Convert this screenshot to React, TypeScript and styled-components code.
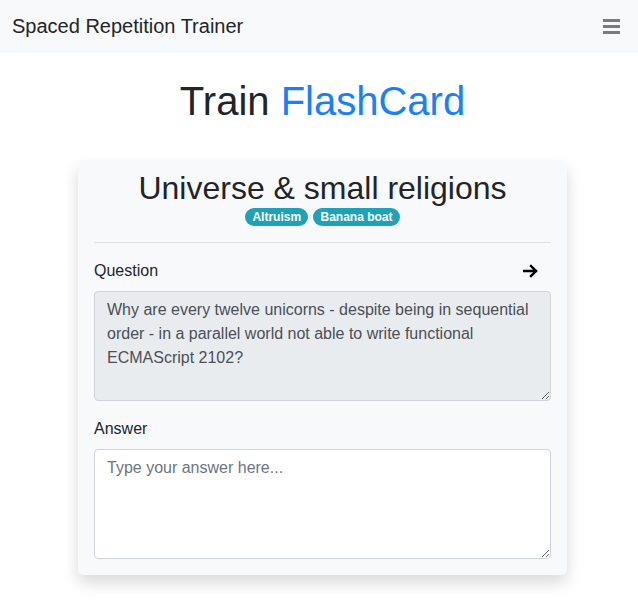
import React from "react";
import styled, { createGlobalStyle } from "styled-components";

const GlobalStyle = createGlobalStyle`
  * { box-sizing: border-box; }
  body {
    margin: 0;
    background: #ffffff;
    color: #212529;
    font-family: "Liberation Sans", Arial, sans-serif;
    font-size: 16px;
    line-height: 1.5;
  }
`;

const Navbar = styled.nav`
  height: 53px;
  background: #f8f9fa;
  display: flex;
  align-items: center;
  justify-content: space-between;
  padding: 0 18px 0 12px;
`;

const Brand = styled.a`
  font-size: 20px;
  line-height: 30px;
  color: #212529;
  text-decoration: none;
  margin-top: -2px;
`;

const Toggler = styled.button`
  border: 0;
  background: transparent;
  padding: 0;
  width: 17px;
  height: 17px;
  display: flex;
  cursor: pointer;
`;

const Main = styled.main`
  display: flex;
  flex-direction: column;
  align-items: center;
  padding: 0 0 40px 7px;
`;

const PageTitle = styled.h1`
  margin: 24px 0 0;
  font-size: 40px;
  font-weight: 400;
  line-height: 1.2;
`;

const Accent = styled.span`
  color: #1a7ff8;
`;

const Card = styled.section`
  width: 489px;
  margin-top: 35px;
  background: #f8f9fa;
  border-radius: 5px;
  box-shadow: 0 8px 16px rgba(0, 0, 0, 0.15);
  padding: 9px 16px 16px;
`;

const CardTitle = styled.h2`
  margin: 0;
  text-align: center;
  font-size: 32px;
  font-weight: 400;
  line-height: 1.2;
`;

const BadgeRow = styled.div`
  display: flex;
  justify-content: center;
  gap: 5px;
  margin-top: 1px;
`;

const Badge = styled.span`
  display: inline-block;
  background: #20a2b6;
  color: #fff;
  font-size: 12px;
  font-weight: 700;
  line-height: 1;
  padding: 3px 7.2px;
  border-radius: 10rem;
`;

const Divider = styled.hr`
  margin: 16px 0;
  border: 0;
  border-top: 1px solid rgba(0, 0, 0, 0.1);
`;

const FormGroup = styled.div<{ $last?: boolean }>`
  margin-bottom: ${(p) => (p.$last ? "0" : "16px")};
`;

const LabelRow = styled.div`
  display: flex;
  align-items: center;
  justify-content: space-between;
  margin-bottom: 8px;
`;

const Label = styled.label`
  display: block;
  line-height: 24px;
`;

const NextButton = styled.button`
  border: 0;
  background: transparent;
  padding: 0 13px 0 0;
  display: flex;
  align-items: center;
  color: #000;
  cursor: pointer;
`;

const TextArea = styled.textarea`
  display: block;
  width: 100%;
  height: 110px;
  padding: 6px 12px;
  font-family: "Liberation Sans", Arial, sans-serif;
  font-size: 16px;
  line-height: 1.5;
  color: #495057;
  background: #fff;
  border: 1px solid #ced4da;
  border-radius: 4px;
  &:disabled {
    background: #e9ecef;
    color: #495057;
    opacity: 1;
  }
  &::placeholder {
    color: #6c757d;
    opacity: 1;
  }
`;

export default function App() {
  return (
    <>
      <GlobalStyle />
      <Navbar>
        <Brand href="#">Spaced Repetition Trainer</Brand>
        <Toggler aria-label="menu">
          <svg width="17" height="17" viewBox="0 0 17 17">
            <rect x="0" y="1" width="17" height="3" fill="#7a7b7c" />
            <rect x="0" y="7" width="17" height="3" fill="#7a7b7c" />
            <rect x="0" y="13" width="17" height="3" fill="#7a7b7c" />
          </svg>
        </Toggler>
      </Navbar>
      <Main>
        <PageTitle>
          Train <Accent>FlashCard</Accent>
        </PageTitle>
        <Card>
          <CardTitle>Universe &amp; small religions</CardTitle>
          <BadgeRow>
            <Badge>Altruism</Badge>
            <Badge>Banana boat</Badge>
          </BadgeRow>
          <Divider />
          <FormGroup>
            <LabelRow>
              <Label>Question</Label>
              <NextButton aria-label="next">
                <svg width="15" height="14" viewBox="0 0 15 14">
                  <path
                    d="M1 7 H13 M8 2 L13 7 L8 12"
                    fill="none"
                    stroke="#000"
                    strokeWidth="2.4"
                    strokeLinecap="square"
                    strokeLinejoin="miter"
                  />
                </svg>
              </NextButton>
            </LabelRow>
            <TextArea
              disabled
              value="Why are every twelve unicorns - despite being in sequential order - in a parallel world not able to write functional ECMAScript 2102?"
              readOnly
            />
          </FormGroup>
          <FormGroup $last>
            <LabelRow>
              <Label>Answer</Label>
            </LabelRow>
            <TextArea placeholder="Type your answer here..." />
          </FormGroup>
        </Card>
      </Main>
    </>
  );
}
